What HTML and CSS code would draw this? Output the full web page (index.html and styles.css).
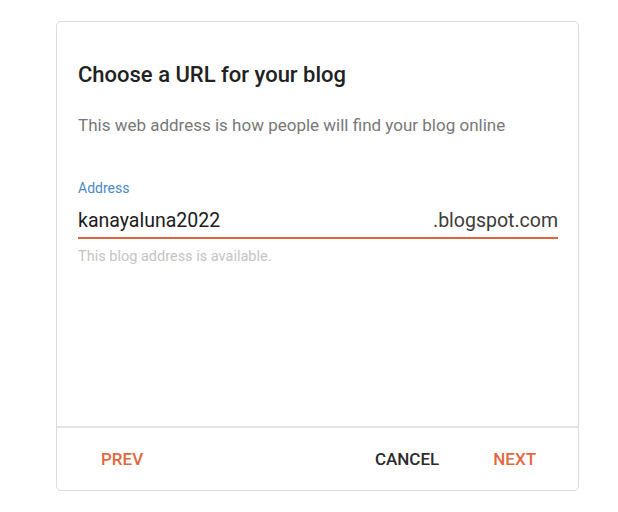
FILE: index.html
```html
<!DOCTYPE html>
<html lang="en">
<head>
    <meta charset="UTF-8">
    <meta name="viewport" content="width=device-width, initial-scale=1.0">
    <title>Choose a URL</title>
    <link rel="stylesheet" href="styles.css">
</head>
<body>
    <div class="url-card">
        <div class="url-body">
            <div class="url-title">Choose a URL for your blog</div>
            <div class="url-subtitle">This web address is how people will find your blog online</div>

            <label class="field-label" for="blogAddress">Address</label>
            <div class="field-row">
                <input type="text" id="blogAddress" class="field-input" value="kanayaluna2022">
                <span class="field-suffix">.blogspot.com</span>
            </div>
            <div class="field-hint">This blog address is available.</div>
        </div>
        <div class="url-footer">
            <button type="button" class="text-button accent">PREV</button>
            <div class="footer-right">
                <button type="button" class="text-button">CANCEL</button>
                <button type="button" class="text-button accent">NEXT</button>
            </div>
        </div>
    </div>
</body>
</html>
```

FILE: styles.css
```css
* {
    box-sizing: border-box;
}
body {
    font-family: Roboto, "Liberation Sans", Arial, sans-serif;
    margin: 0;
    padding: 0;
    background-color: #ffffff;
    color: #212121;
}
.url-card {
    margin: 21px 0 0 56px;
    width: 523px;
    height: 470px;
    border: 1px solid #dcdcdc;
    border-radius: 5px;
    display: flex;
    flex-direction: column;
}
.url-body {
    flex: 1;
    padding: 39px 20px 0 21px;
}
.url-title {
    font-size: 22px;
    font-weight: 500;
    line-height: 28px;
    color: #212121;
}
.url-subtitle {
    margin-top: 24px;
    font-size: 17px;
    line-height: 24px;
    color: #787878;
}
.field-label {
    display: block;
    margin-top: 41px;
    font-size: 14px;
    line-height: 20px;
    color: #4a8ac4;
}
.field-row {
    display: flex;
    align-items: center;
    margin-top: 11px;
    padding-bottom: 4px;
    border-bottom: 2px solid #e0643b;
}
.field-input {
    flex: 1;
    min-width: 0;
    border: none;
    outline: none;
    padding: 0;
    margin: 0;
    font-family: inherit;
    font-size: 19.5px;
    line-height: 24px;
    height: 24px;
    color: #1c1c1c;
    background: transparent;
}
.field-suffix {
    font-size: 19.5px;
    line-height: 24px;
    color: #3c3c3c;
}
.field-hint {
    margin-top: 9px;
    font-size: 14.5px;
    line-height: 18px;
    color: #c4c4c4;
}
.url-footer {
    height: 64px;
    border-top: 2px solid #e4e4e4;
    display: flex;
    align-items: center;
    justify-content: space-between;
    padding: 0 20px 0 22px;
}
.footer-right {
    display: flex;
    gap: 10px;
}
.text-button {
    background: none;
    border: none;
    padding: 0 22px;
    height: 40px;
    font-family: inherit;
    font-size: 17px;
    font-weight: 500;
    color: #2b2b2b;
    cursor: pointer;
}
.text-button.accent {
    color: #e2683f;
}
```
